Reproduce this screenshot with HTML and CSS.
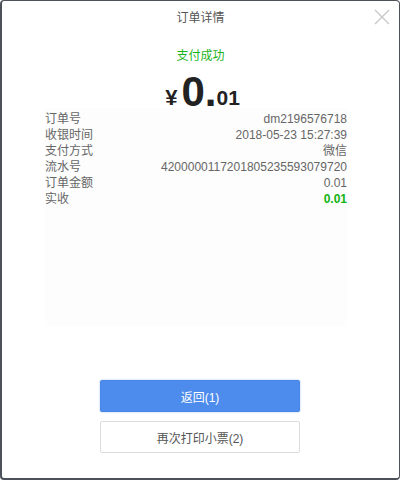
FILE: index.html
```html
<!DOCTYPE html>
<html lang="zh">
<head>
<meta charset="utf-8">
<link rel="stylesheet" href="styles.css">
</head>
<body>
<div class="dialog">
  <div class="header">
    <span class="title">订单详情</span>
    <span class="close" aria-label="close">
      <svg width="16" height="16" viewBox="0 0 16 16"><path d="M1 1L15 15M15 1L1 15" stroke="#c8c8c8" stroke-width="1.4" fill="none"/></svg>
    </span>
  </div>
  <div class="status">支付成功</div>
  <div class="amount"><span class="yen">¥</span><span class="int">0.</span><span class="dec">01</span></div>
  <div class="panel">
    <div class="row"><span>订单号</span><span>dm2196576718</span></div>
    <div class="row"><span>收银时间</span><span>2018-05-23 15:27:39</span></div>
    <div class="row"><span>支付方式</span><span>微信</span></div>
    <div class="row"><span>流水号</span><span>4200000117201805235593079720</span></div>
    <div class="row"><span>订单金额</span><span>0.01</span></div>
    <div class="row"><span>实收</span><span class="green">0.01</span></div>
  </div>
  <div class="actions">
    <button class="btn primary">返回(1)</button>
    <button class="btn">再次打印小票(2)</button>
  </div>
</div>
</body>
</html>
```
FILE: styles.css
```css
html, body {
  margin: 0;
  padding: 0;
  background: #ffffff;
}
body {
  font-family: "Liberation Sans", "Noto Sans CJK SC", sans-serif;
  width: 400px;
  height: 480px;
}
.dialog {
  box-sizing: border-box;
  width: 400px;
  height: 480px;
  border: 1px solid #4d5159;
  border-left-width: 2px;
  border-bottom-width: 2px;
  border-radius: 4px;
  background: #fff;
  display: flex;
  flex-direction: column;
  align-items: center;
}
.header {
  position: relative;
  width: 100%;
  height: 30px;
  display: flex;
  align-items: center;
  justify-content: center;
}
.title {
  font-size: 12px;
  color: #555;
}
.close {
  position: absolute;
  right: 9px;
  top: 8px;
  width: 16px;
  height: 16px;
  display: flex;
}
.status {
  margin-top: 17px;
  font-size: 12px;
  line-height: 16px;
  color: #1bb51b;
}
.amount {
  margin-top: 6px;
  margin-left: 4px;
  height: 38px;
  display: flex;
  align-items: baseline;
  color: #222;
  font-weight: bold;
}
.yen {
  font-size: 22px;
  margin-right: 4px;
  position: relative;
  top: -1px;
}
.int {
  font-size: 42px;
  line-height: 44px;
}
.dec {
  font-size: 21px;
  position: relative;
  top: -1px;
}
.panel {
  box-sizing: border-box;
  align-self: flex-start;
  margin-left: 43px;
  width: 302px;
  height: 218px;
  padding-top: 3px;
  background: #fdfdfd;
  display: flex;
  flex-direction: column;
}
.row {
  display: flex;
  justify-content: space-between;
  font-size: 12px;
  line-height: 16px;
  color: #666;
}
.green {
  color: #12b312;
  font-weight: bold;
}
.actions {
  margin-top: 54px;
  margin-right: 1px;
  display: flex;
  flex-direction: column;
  gap: 9px;
}
.btn {
  width: 200px;
  height: 32px;
  border: 1px solid #dcdcdc;
  border-radius: 2px;
  background: #fff;
  color: #555;
  font-family: "Liberation Sans", "Noto Sans CJK SC", sans-serif;
  font-size: 12px;
  padding: 0;
}
.btn.primary {
  background: #4d8bec;
  border-color: #4a86e6;
  color: #fff;
  box-shadow: 0 0 2px rgba(77,139,236,0.6);
}
```
